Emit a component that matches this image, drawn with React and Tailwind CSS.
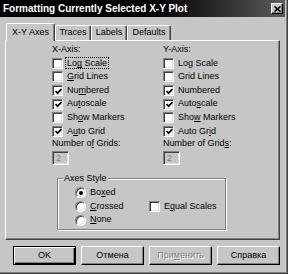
import React from "react";

const Mn = ({ t, i }) => {
  if (i == null || i < 0) return <>{t}</>;
  return (
    <>
      {t.slice(0, i)}
      <span className="underline underline-offset-[1px]">{t[i]}</span>
      {t.slice(i + 1)}
    </>
  );
};

const Box = ({ checked }) => (
  <span className="relative flex items-center justify-center w-[11px] h-[11px] shrink-0 bg-white border border-t-[#808080] border-l-[#808080] border-b-white border-r-white shadow-[inset_1px_1px_0_#404040,inset_-1px_-1px_0_#dfdfdf]">
    {checked && (
      <svg width="7" height="7" viewBox="0 0 7 7" className="ml-[1px] mt-[1px]">
        <polyline points="0.5,3 2.6,5.2 6.5,1" fill="none" stroke="#000" strokeWidth="1.7" />
      </svg>
    )}
  </span>
);

const Check = ({ label, u, checked, focus }) => (
  <div className="h-[13.6px] flex items-center gap-[4px]">
    <Box checked={checked} />
    <span className={focus ? "outline outline-1 outline-dotted outline-black px-[1px] -ml-[1px] leading-[10px]" : ""}>
      <Mn t={label} i={u} />
    </span>
  </div>
);

const Radio = ({ label, u, on }) => (
  <div className="h-[13.6px] flex items-center gap-[4px]">
    <span className="flex items-center justify-center w-[11px] h-[11px] shrink-0 rounded-full bg-white border border-t-[#808080] border-l-[#808080] border-b-white border-r-white shadow-[inset_1px_1px_0_#404040,inset_-1px_-1px_0_#dfdfdf]">
      {on && <span className="w-[4px] h-[4px] rounded-full bg-black" />}
    </span>
    <span>
      <Mn t={label} i={u} />
    </span>
  </div>
);

const axes = {
  x: [
    ["Log Scale", 2, false, true],
    ["Grid Lines", 0, false],
    ["Numbered", 2, true],
    ["Autoscale", 2, true],
    ["Show Markers", 2, false],
    ["Auto Grid", 1, true],
  ],
  y: [
    ["Log Scale", -1, false],
    ["Grid Lines", -1, false],
    ["Numbered", -1, true],
    ["Autoscale", 4, true],
    ["Show Markers", 3, false],
    ["Auto Grid", 7, true],
  ],
};

const AxisColumn = ({ title, rows, gridsU }) => (
  <div className="flex flex-col">
    <div className="h-[13.6px] leading-[13.6px]">{title}</div>
    {rows.map(([label, u, checked, focus]) => (
      <Check key={label} label={label} u={u} checked={checked} focus={focus} />
    ))}
    <div className="h-[10px] leading-[10px]">
      <Mn t="Number of Grids:" i={gridsU} />
    </div>
    <div className="mt-[3px] w-[17px] h-[14px] pl-[3px] leading-[12px] text-[#808080] border border-t-[#808080] border-l-[#808080] border-b-white border-r-white shadow-[inset_1px_1px_0_#404040,inset_-1px_-1px_0_#dfdfdf]">
      2
    </div>
  </div>
);

const Tab = ({ label, active, w }) =>
  active ? (
    <div
      className={`${w} h-[18px] -mb-[1px] relative z-10 flex items-center justify-center bg-[#c6c6c6] border-t border-l border-white border-r border-r-[#404040] rounded-t-[2px] shadow-[inset_-1px_0_0_#808080]`}
    >
      {label}
    </div>
  ) : (
    <div
      className={`${w} h-[15px] flex items-center justify-center border-t border-l border-white border-r border-r-[#404040] rounded-t-[2px] shadow-[inset_-1px_0_0_#808080]`}
    >
      {label}
    </div>
  );

const Button = ({ children, def, disabled }) => (
  <div
    className={
      "w-[63px] h-[19px] flex items-center justify-center " +
      (def
        ? "border border-black shadow-[inset_1px_1px_0_#fff,inset_-1px_-1px_0_#000,inset_-2px_-2px_0_#808080]"
        : "border border-t-white border-l-white border-b-black border-r-black shadow-[inset_-1px_-1px_0_#808080]") +
      (disabled ? " text-[#808080] [text-shadow:1px_1px_0_#fff]" : "")
    }
  >
    {children}
  </div>
);

export default function App() {
  return (
    <div className="w-[288px] h-[274px] bg-[#c6c6c6] overflow-hidden text-black text-[9px] font-['Liberation_Sans',Arial,sans-serif] shadow-[inset_-1px_-1px_0_#404040,inset_-2px_-2px_0_#808080]">
      {/* title bar */}
      <div className="w-[285px] h-[17px] flex items-center justify-between pl-[3px] pr-[2px] bg-linear-to-r from-black from-40% to-[#5c5c5c]">
        <span className="text-white font-bold text-[10px] leading-[17px]">
          Formatting Currently Selected X-Y Plot
        </span>
        <div className="w-[12px] h-[11px] flex items-center justify-center bg-[#c6c6c6] border border-t-white border-l-white border-b-black border-r-black shadow-[inset_-1px_-1px_0_#808080]">
          <svg width="7" height="6" viewBox="0 0 7 6">
            <path d="M0.5 0.5 L6.5 5.5 M6.5 0.5 L0.5 5.5" stroke="#000" strokeWidth="1.6" />
          </svg>
        </div>
      </div>

      {/* tabs */}
      <div className="mt-[6px] ml-[6px] h-[17px] flex items-end">
        <Tab label="X-Y Axes" active w="w-[49px]" />
        <Tab label="Traces" w="w-[36px]" />
        <Tab label="Labels" w="w-[36px]" />
        <Tab label="Defaults" w="w-[44px]" />
      </div>

      {/* panel */}
      <div className="ml-[5px] w-[275px] h-[200px] border-t border-l border-white border-r border-b border-r-[#404040] border-b-[#404040] shadow-[inset_-1px_-1px_0_#808080]">
        <div className="pt-[2px] pl-[46px] grid grid-cols-[111px_111px]">
          <AxisColumn title="X-Axis:" rows={axes.x} gridsU={8} />
          <AxisColumn title="Y-Axis:" rows={axes.y} gridsU={14} />
        </div>

        <div className="relative ml-[51px] mt-[13px] w-[169px] h-[52px] border border-[#808080] shadow-[1px_1px_0_#fff,inset_1px_1px_0_#fff] flex">
          <span className="absolute -top-[7px] left-[5px] px-[1px] bg-[#c6c6c6] leading-[12px]">
            Axes Style
          </span>
          <div className="w-[91px] pl-[17px] pt-[7px] flex flex-col">
            <Radio label="Boxed" u={2} on />
            <Radio label="Crossed" u={0} />
            <Radio label="None" u={0} />
          </div>
          <div className="pt-[20.6px]">
            <Check label="Equal Scales" u={1} checked={false} />
          </div>
        </div>
      </div>

      {/* buttons */}
      <div className="mt-[6px] ml-[13px] flex gap-[5px]">
        <Button def>OK</Button>
        <Button>Отмена</Button>
        <Button disabled>
          <Mn t="Применить" i={3} />
        </Button>
        <Button>Справка</Button>
      </div>
    </div>
  );
}
